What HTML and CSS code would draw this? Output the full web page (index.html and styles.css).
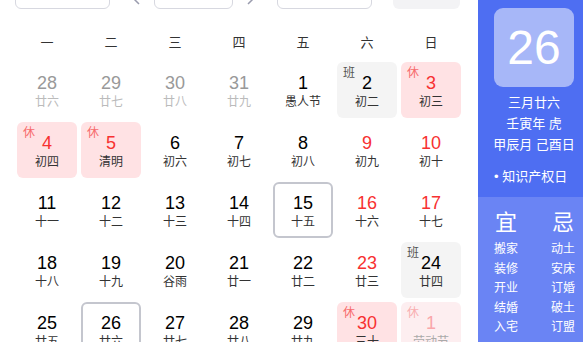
FILE: index.html
```html
<!DOCTYPE html>
<html lang="zh-CN">
<head>
    <meta charset="UTF-8">
    <meta name="viewport" content="width=device-width, initial-scale=1.0">
    <title>万年历</title>
    <link rel="stylesheet" href="styles.css">
</head>
<body>
    <div class="page">
        <div class="calendar">
            <div class="toolbar">
                <div class="select year-select"></div>
                <span class="arrow prev"><svg width="8" height="10" viewBox="0 0 8 10"><path d="M6 1L2 5l4 4" fill="none" stroke="#9a9cae" stroke-width="1.5"/></svg></span>
                <div class="select month-select"></div>
                <span class="arrow next"><svg width="8" height="10" viewBox="0 0 8 10"><path d="M2 1l4 4-4 4" fill="none" stroke="#9a9cae" stroke-width="1.5"/></svg></span>
                <div class="select holiday-select"></div>
                <div class="today-btn"></div>
            </div>

            <div class="weekdays">
                <span>一</span><span>二</span><span>三</span><span>四</span><span>五</span><span>六</span><span>日</span>
            </div>

            <div class="grid">
                <!-- row 1 -->
                <div class="cell prev"><div class="num">28</div><div class="lunar">廿六</div></div>
                <div class="cell prev"><div class="num">29</div><div class="lunar">廿七</div></div>
                <div class="cell prev"><div class="num">30</div><div class="lunar">廿八</div></div>
                <div class="cell prev"><div class="num">31</div><div class="lunar">廿九</div></div>
                <div class="cell"><div class="num">1</div><div class="lunar">愚人节</div></div>
                <div class="cell work"><span class="tag">班</span><div class="num">2</div><div class="lunar">初二</div></div>
                <div class="cell rest"><span class="tag">休</span><div class="num">3</div><div class="lunar">初三</div></div>
                <!-- row 2 -->
                <div class="cell rest"><span class="tag">休</span><div class="num">4</div><div class="lunar">初四</div></div>
                <div class="cell rest"><span class="tag">休</span><div class="num">5</div><div class="lunar">清明</div></div>
                <div class="cell"><div class="num">6</div><div class="lunar">初六</div></div>
                <div class="cell"><div class="num">7</div><div class="lunar">初七</div></div>
                <div class="cell"><div class="num">8</div><div class="lunar">初八</div></div>
                <div class="cell weekend"><div class="num">9</div><div class="lunar">初九</div></div>
                <div class="cell weekend"><div class="num">10</div><div class="lunar">初十</div></div>
                <!-- row 3 -->
                <div class="cell"><div class="num">11</div><div class="lunar">十一</div></div>
                <div class="cell"><div class="num">12</div><div class="lunar">十二</div></div>
                <div class="cell"><div class="num">13</div><div class="lunar">十三</div></div>
                <div class="cell"><div class="num">14</div><div class="lunar">十四</div></div>
                <div class="cell outlined"><div class="num">15</div><div class="lunar">十五</div></div>
                <div class="cell weekend"><div class="num">16</div><div class="lunar">十六</div></div>
                <div class="cell weekend"><div class="num">17</div><div class="lunar">十七</div></div>
                <!-- row 4 -->
                <div class="cell"><div class="num">18</div><div class="lunar">十八</div></div>
                <div class="cell"><div class="num">19</div><div class="lunar">十九</div></div>
                <div class="cell"><div class="num">20</div><div class="lunar">谷雨</div></div>
                <div class="cell"><div class="num">21</div><div class="lunar">廿一</div></div>
                <div class="cell"><div class="num">22</div><div class="lunar">廿二</div></div>
                <div class="cell weekend"><div class="num">23</div><div class="lunar">廿三</div></div>
                <div class="cell work"><span class="tag">班</span><div class="num">24</div><div class="lunar">廿四</div></div>
                <!-- row 5 -->
                <div class="cell"><div class="num">25</div><div class="lunar">廿五</div></div>
                <div class="cell outlined"><div class="num">26</div><div class="lunar">廿六</div></div>
                <div class="cell"><div class="num">27</div><div class="lunar">廿七</div></div>
                <div class="cell"><div class="num">28</div><div class="lunar">廿八</div></div>
                <div class="cell"><div class="num">29</div><div class="lunar">廿九</div></div>
                <div class="cell rest"><span class="tag">休</span><div class="num">30</div><div class="lunar">三十</div></div>
                <div class="cell rest next"><span class="tag">休</span><div class="num">1</div><div class="lunar">劳动节</div></div>
            </div>
        </div>

        <div class="side">
            <div class="side-top">
                <div class="big-date">26</div>
                <div class="info">
                    <div>三月廿六</div>
                    <div>壬寅年 虎</div>
                    <div>甲辰月 己酉日</div>
                </div>
                <div class="festival">• 知识产权日</div>
            </div>
            <div class="side-bottom">
                <div class="col">
                    <div class="head">宜</div>
                    <div>搬家</div>
                    <div>装修</div>
                    <div>开业</div>
                    <div>结婚</div>
                    <div>入宅</div>
                </div>
                <div class="col">
                    <div class="head">忌</div>
                    <div>动土</div>
                    <div>安床</div>
                    <div>订婚</div>
                    <div>破土</div>
                    <div>订盟</div>
                </div>
            </div>
        </div>
    </div>
</body>
</html>
```

FILE: styles.css
```css
body {
    margin: 0;
    padding: 0;
    background-color: #fff;
    font-family: "Liberation Sans", "Noto Sans CJK SC", sans-serif;
    color: #333;
    overflow: hidden;
}

.page {
    display: flex;
    height: 342px;
}

.calendar {
    width: 478px;
    flex-shrink: 0;
}

/* top controls, mostly scrolled out of view */
.toolbar {
    display: flex;
    align-items: center;
    height: 30px;
    margin-top: -21px;
    padding-left: 15px;
}

.select {
    height: 30px;
    box-sizing: border-box;
    border: 1px solid #d7d8e0;
    border-radius: 6px;
}

.year-select,
.holiday-select {
    width: 95px;
}

.month-select {
    width: 79px;
    margin-left: 12px;
}

.arrow {
    width: 10px;
    display: flex;
    justify-content: center;
    margin-top: 11px;
}

.arrow.prev {
    margin-left: 22px;
}

.arrow.next {
    margin-left: 12px;
}

.holiday-select {
    margin-left: 22px;
}

.today-btn {
    width: 67px;
    height: 30px;
    margin-left: 21px;
    border-radius: 6px;
    background-color: #f3f3f5;
}

.weekdays,
.grid {
    display: grid;
    grid-template-columns: repeat(7, 60px);
    column-gap: 4px;
    padding: 0 17px;
}

.weekdays {
    margin-top: 24px;
    line-height: 20px;
    font-size: 13px;
    text-align: center;
    color: #333;
}

.grid {
    margin-top: 9px;
    grid-auto-rows: 56px;
    row-gap: 4px;
}

.cell {
    position: relative;
    box-sizing: border-box;
    padding-top: 10px;
    border-radius: 6px;
    text-align: center;
}

.num {
    font-size: 18px;
    line-height: 22px;
    color: #000;
}

.lunar {
    font-size: 12px;
    line-height: 16px;
    color: #333;
    white-space: nowrap;
}

.tag {
    position: absolute;
    left: 6px;
    top: 3px;
    font-size: 12px;
    line-height: 16px;
}

.cell.prev .num {
    color: #999;
}

.cell.prev .lunar {
    color: #bbb;
}

.cell.weekend .num,
.cell.rest .num {
    color: #f73131;
}

.cell.rest {
    background-color: #ffe2e4;
}

.cell.rest .tag {
    color: #f76b6b;
}

.cell.work {
    background-color: #f4f4f4;
}

.cell.work .tag {
    color: #555;
}

.cell.outlined {
    border: 2px solid #c4c6ce;
    padding-top: 8px;
}

.cell.next {
    background-color: #fdeef0;
}

.cell.next .num {
    color: #f9a7ab;
}

.cell.next .tag {
    color: #f9aeb0;
}

.cell.next .lunar {
    color: #aaa;
}

/* right side panel */
.side {
    width: 105px;
    flex-shrink: 0;
    display: flex;
    flex-direction: column;
    color: #fff;
    background-color: #4e6ef2;
}

.side-top {
    height: 197px;
    box-sizing: border-box;
    padding: 8px 9px 0 16px;
}

.big-date {
    width: 80px;
    height: 79px;
    border-radius: 9px;
    background-color: #a7b7f8;
    font-size: 48px;
    line-height: 79px;
    text-align: center;
}

.info {
    margin: 5px -6px 0;
    font-size: 13px;
    line-height: 21px;
    text-align: center;
    white-space: nowrap;
}

.festival {
    margin-top: 11px;
    font-size: 13px;
    line-height: 21px;
    white-space: nowrap;
}

.side-bottom {
    flex: 1;
    display: flex;
    justify-content: space-between;
    padding: 13px 8px 0 16px;
    background-color: #6a84f4;
    font-size: 12px;
    line-height: 19.5px;
}

.col {
    width: 24px;
    text-align: center;
}

.col .head {
    font-size: 22px;
    line-height: 26px;
    margin-bottom: 4px;
}
```
